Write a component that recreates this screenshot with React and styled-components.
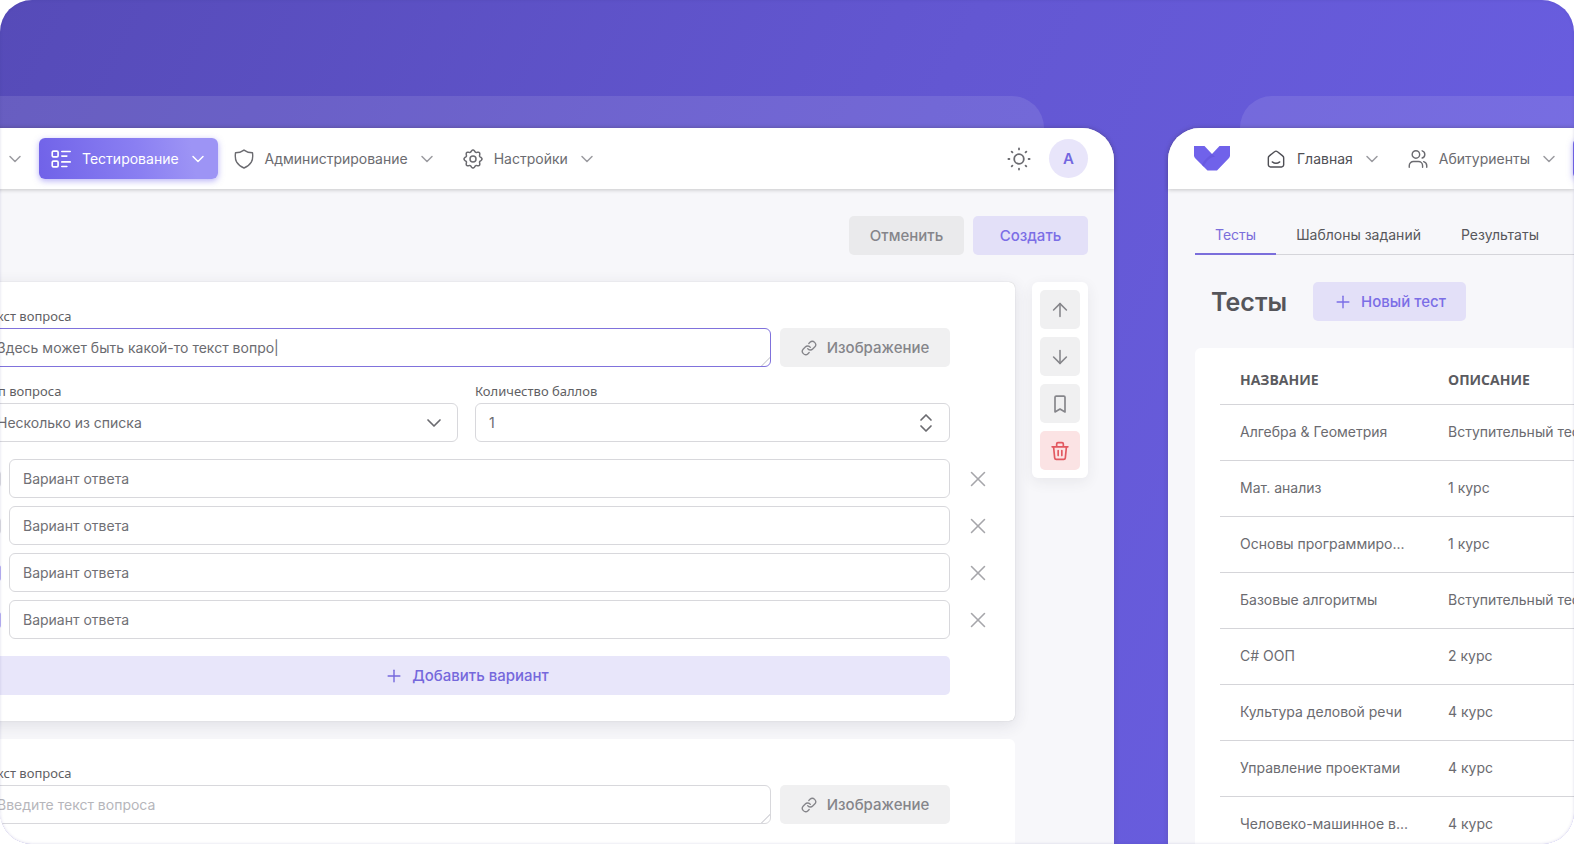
import React from 'react'
import styled, { createGlobalStyle, css } from 'styled-components';
import { ArrowDown, ArrowUp, ChevronDown, ChevronsUpDown, Link, Plus, X } from 'lucide-react';


const GlobalStyle = createGlobalStyle`
    * {
        box-sizing:border-box;
    }
    body {
        margin:0;
        background:#ffffff;
        color:#6b6b70;
        font-family:Inter, "Liberation Sans", sans-serif;
        font-size:14px;
        line-height:20px;
    }
    button, input, textarea, select {
        font:inherit;
        color:inherit;
    }
    button {
        cursor:pointer;
    }
`;

const Stage = styled.main`
    position:relative;
    z-index:0;
    display:flex;
    gap:54px;
    height:100vh;
    padding-top:128px;
    overflow:hidden;
    border-radius:32px;
    background:linear-gradient(115deg, #564bb8 0%, #6357d2 50%, #6b60e5 100%);

    &::after {
        content:"";
        position:absolute;
        inset:0;
        border-radius:32px;
        box-shadow:inset 0 0 3px rgba(60, 50, 140, 0.18);
        pointer-events:none;
    }
`;

const Window = styled.section`
    position:relative;
    min-width:0;
    background:#f7f7fa;
    box-shadow:0 0 5px rgba(80, 70, 100, 0.3);

    &::before {
        content:"";
        position:absolute;
        z-index:-1;
        top:-32px;
        height:32px;
        background:rgba(255, 255, 255, 0.1);
    }
`;

const EditorWindow = styled(Window)`
    flex:1;
    margin-left:-366px;
    border-radius:0 32px 0 0;

    &::before {
        left:0;
        right:70px;
        border-radius:0 32px 0 0;
    }
`;

const ListWindow = styled(Window)`
    flex:0 0 406px;
    border-radius:32px 0 0 0;

    &::before {
        left:72px;
        right:0;
        border-radius:32px 0 0 0;
    }
`;

const Header = styled.header`
    display:flex;
    align-items:center;
    justify-content:space-between;
    height:61px;
    padding:0 26px;
    border-radius:inherit;
    background:#ffffff;
    box-shadow:0 1px 4px rgba(0, 0, 0, 0.2);
`;

const ClippedHeader = styled(Header)`
    overflow:hidden;
    justify-content:flex-start;
`;

const HeaderSide = styled.div`
    display:flex;
    align-items:center;
    gap:${({ $gap }) => $gap}px;
`;

const LogoLink = styled.a`
    display:flex;
    flex:none;
`;

const Nav = styled.nav`
    display:flex;
    gap:4px;
`;

const NavButton = styled.button`
    display:flex;
    flex:none;
    align-items:center;
    gap:11px;
    height:41px;
    padding:0 12px;
    border:0;
    border-radius:6px;
    background:none;
    white-space:nowrap;
    color:${({ $dark }) => ($dark ? '#4f4f55' : '#6b6b70')};

    svg:last-child {
        margin:0 -2px;
        color:#9b9ba0;
    }

    ${({ $active }) => $active && css`
        background:linear-gradient(80deg, #7062e8 0%, #8a7ff2 55%, #9d94f5 85%);
        box-shadow:0 2px 6px rgba(115, 103, 240, 0.5);
        color:#ffffff;

        svg:last-child {
            color:#ffffff;
        }
    `}
`;

const ThemeButton = styled.button`
    display:flex;
    padding:0;
    border:0;
    background:none;
`;

const Avatar = styled.button`
    width:39px;
    height:39px;
    padding:0;
    border:0;
    border-radius:50%;
    background:#e8e5fa;
    color:#7367e0;
    font-size:15px;
    font-weight:600;
`;

const buttonColors = {
    gray: css`background:#f0f0f1; color:#85858a;`,
    darkGray: css`background:#eaeaec; color:#85858a;`,
    purple: css`background:#e3e0f8; color:#7b6ee6;`,
    lightPurple: css`background:#e8e6fa; color:#7568dc;`,
    red: css`background:#fbe3e4; color:#e25860;`,
};

const Button = styled.button`
    display:flex;
    flex:none;
    align-items:center;
    justify-content:center;
    gap:8px;
    height:39px;
    min-width:115px;
    padding:0 20px;
    border:0;
    border-radius:5px;
    font-size:15px;
    font-weight:500;
    white-space:nowrap;
    ${({ $color }) => buttonColors[$color]}
`;

const ImageButton = styled(Button)`
    width:170px;
    padding:0;
    gap:10px;
`;

const AddButton = styled(Button)`
    margin:17px 48px 0 0;
`;

const Actions = styled.div`
    display:flex;
    justify-content:flex-end;
    gap:9px;
    padding:27px 26px;
`;

const Editor = styled.div`
    display:flex;
    align-items:flex-start;
    gap:17px;
    padding:0 26px 0 284px;
`;

const Questions = styled.div`
    display:flex;
    flex:1;
    flex-direction:column;
    gap:18px;
    min-width:0;
`;

const Card = styled.form`
    display:flex;
    flex-direction:column;
    padding:24px 17px 26px 65px;
    border-radius:6px;
    background:#ffffff;
    box-shadow:${({ $selected }) => ($selected ? '0 4px 16px rgba(50, 50, 70, 0.12), 0 0 1px rgba(0, 0, 0, 0.25)' : 'none')};
`;

const Field = styled.div`
    display:flex;
    flex:1;
    flex-direction:column;
    gap:2px;
    min-width:0;
`;

const FieldRow = styled.div`
    display:flex;
    align-items:flex-end;
    gap:${({ $gap }) => $gap}px;
    margin:0 48px 14px 0;
`;

const Label = styled.label`
    color:#5f5f64;
    font-family:"Noto Sans", sans-serif;
    font-size:13px;
    line-height:20px;
`;

const inputStyles = css`
    display:block;
    width:100%;
    min-width:0;
    height:39px;
    margin:0;
    padding:0 13px;
    border:1px solid #d8d8dc;
    border-radius:6px;
    outline:none;
    background:#ffffff;

    &::placeholder {
        color:${({ $faint }) => ($faint ? '#b6b6bb' : '#707075')};
        opacity:1;
    }
`;

const Input = styled.input`
    ${inputStyles}
    appearance:textfield;

    &::-webkit-inner-spin-button {
        display:none;
    }
`;

const Select = styled.select`
    ${inputStyles}
    appearance:none;
`;

const TextArea = styled.textarea`
    ${inputStyles}
    padding:9px 13px;
    overflow:hidden;
    resize:vertical;
    border-color:${({ $focused }) => ($focused ? '#8072dc' : '#d8d8dc')};

    &::-webkit-resizer {
        background:linear-gradient(135deg, transparent 68%, #dcdce0 68%, #dcdce0 74%, transparent 74%);
    }
`;

const Control = styled.div`
    position:relative;
`;

const ControlIcon = styled.span`
    position:absolute;
    top:0;
    bottom:0;
    right:12px;
    display:flex;
    align-items:center;
    pointer-events:none;
`;

const Options = styled.div`
    display:flex;
    flex-direction:column;
    gap:8px;
    margin-top:3px;
`;

const Option = styled.div`
    display:flex;
    align-items:center;
    gap:8px;
`;

const Checkbox = styled.input`
    flex:none;
    width:18px;
    height:18px;
    margin:0;
    border:1px solid ${({ checked }) => (checked ? '#b9b2f5' : '#dcdce0')};
    border-radius:4px;
    background:${({ checked }) => (checked ? '#7367f0' : '#ffffff')};
    appearance:none;
`;

const RemoveButton = styled.button`
    display:flex;
    flex:none;
    align-items:center;
    justify-content:center;
    width:40px;
    height:39px;
    padding:0;
    border:0;
    background:none;
    color:#a6a6aa;
`;

const Toolbar = styled.aside`
    display:flex;
    flex-direction:column;
    gap:8px;
    padding:8px;
    border-radius:6px;
    background:#ffffff;
    box-shadow:0 4px 14px rgba(50, 50, 70, 0.08);
`;

const ToolButton = styled(Button)`
    width:40px;
    min-width:0;
    padding:0;
`;

const Page = styled.div`
    padding:27px 0 0 27px;
`;

const Tabs = styled.nav`
    display:flex;
    border-bottom:1px solid #d5d5da;
`;

const Tab = styled.a`
    flex:none;
    margin-bottom:-1px;
    padding:9px 20px 8px;
    border-bottom:2px solid ${({ $active }) => ($active ? '#7b6edb' : 'transparent')};
    color:${({ $active }) => ($active ? '#7b6edb' : '#57575c')};
    text-decoration:none;
    white-space:nowrap;
`;

const TitleRow = styled.div`
    display:flex;
    align-items:center;
    gap:26px;
    padding:27px 16px;
`;

const Title = styled.h1`
    margin:0;
    color:#55555a;
    font-size:25px;
    font-weight:600;
    line-height:32px;
`;

const TableCard = styled.div`
    padding:8px 0 0 25px;
    border-radius:6px 0 0 0;
    background:#ffffff;
    overflow:hidden;
`;

const Table = styled.table`
    width:100%;
    border-collapse:collapse;
    table-layout:fixed;
`;

const HeadCell = styled.th`
    width:${({ $width }) => $width};
    height:48px;
    padding:0 0 0 20px;
    border-bottom:1px solid #d5d5d9;
    color:#5b5b60;
    font-family:"Open Sans", "Noto Sans", sans-serif;
    font-size:14px;
    font-weight:700;
    text-align:left;
    text-transform:uppercase;
`;

const Cell = styled.td`
    height:56px;
    padding:0 0 0 20px;
    border-bottom:1px solid #d5d5d9;
    white-space:nowrap;
`;

const Icon = ({ size = 20, width = 1.5, children }) => (
    <svg width={size} height={size} viewBox="0 0 24 24" fill="none" stroke="currentColor" strokeWidth={width} strokeLinecap="round" strokeLinejoin="round" aria-hidden="true">
        {children}
    </svg>
)

const HomeIcon = () => (
    <Icon width={1.7}>
        <path d="M2.8 10.6c0-1 .4-1.8 1.2-2.4l6.2-4.9a2.8 2.8 0 0 1 3.6 0L20 8.2c.8.6 1.2 1.4 1.2 2.4V19a2.5 2.5 0 0 1-2.5 2.5H5.3A2.5 2.5 0 0 1 2.8 19z" />
        <path d="M7.5 15.5c2.5 1.800 6.5 1.800 9 0" />
    </Icon>
)

const UsersIcon = () => (
    <Icon width={1.7}>
        <circle cx="9.5" cy="6.5" r="4.5" />
        <path d="M1.5 22v-2a5 5 0 0 1 5-5h6a5 5 0 0 1 5 5v2M17 2.2a4.5 4.5 0 0 1 0 8.6M22.5 22v-2a5 5 0 0 0-3.7-4.8" />
    </Icon>
)

const TestsIcon = () => (
    <Icon width={2}>
        <rect x="1.5" y="2.5" width="7" height="7" rx="1.5" />
        <rect x="1.5" y="14.5" width="7" height="7" rx="1.5" />
        <path d="M13 3h10M13 8.5h6M13 15.5h10M13 21h6" />
    </Icon>
)

const ShieldIcon = () => (
    <Icon width={1.7}>
        <path d="M12 1.3c3 2.3 6.3 3.2 10.2 3.2.6 4.8.4 8.3-1.4 11.3-1.8 3-4.8 5.3-8.8 7-4-1.7-7-4-8.8-7-1.8-3-2-6.5-1.4-11.3 3.9 0 7.2-.9 10.200-3.200z" />
    </Icon>
)

// eight soft teeth around the hub
const gearPoints = Array.from({ length: 128 }, (_, i) => {
    const angle = (i / 128) * Math.PI * 2;
    const radius = 9.7 + 1.1 * Math.cos(angle * 8);
    return `${(12 + radius * Math.sin(angle)).toFixed(2)},${(12 - radius * Math.cos(angle)).toFixed(2)}`;
}).join(' ');

const SettingsIcon = () => (
    <Icon width={1.8}>
        <polygon points={gearPoints} />
        <circle cx="12" cy="12" r="3.6" />
    </Icon>
)

const SunIcon = () => (
    <Icon size={24} width={1.8}>
        <circle cx="12" cy="12" r="4.8" />
        <path d="M12 1.4v1M12 21.6v1M1.4 12h1M21.6 12h1M4.7 4.7l.7.7M18.6 18.6l.7.7M4.7 19.3l.7-.7M18.6 5.4l.7-.7" />
    </Icon>
)

const BookmarkIcon = () => (
    <Icon width={2}>
        <path d="M6 4a1.5 1.5 0 0 1 1.5-1.5h9A1.5 1.5 0 0 1 18 4v17.5l-6-3.5-6 3.5z" />
    </Icon>
)

const TrashIcon = () => (
    <Icon width={2}>
        <path d="M2.5 7h19M8 7V3.5A1.5 1.5 0 0 1 9.5 2h5A1.5 1.5 0 0 1 16 3.5V7M4.3 7l1.3 13.2A2 2 0 0 0 7.6 22h8.8a2 2 0 0 0 2-1.8L19.7 7M9.8 11.5v6M14.2 11.5v6" />
    </Icon>
)

const Logo = () => (
    <svg width="36" height="25" viewBox="0 0 36 25" aria-hidden="true">
        <path fill="#7062ea" d="M0 0h10.5L18 8l7.500-8H36v9.500c0 1-.4 2-1.200 2.700L23 24.500h-9.500L1.200 12.200A4 4 0 0 1 0 9.500z" />
        <path fill="#5f50d6" d="M18 8l3 2.800c-4.500.5-8 2.800-11.300 10L7.800 19c2.500-5 5.800-8 10.200-11z" opacity=".5" />
    </svg>
)

const NavItem = ({ icon, active, dark, children }) => (
    <NavButton type="button" $active={active} $dark={dark}>
        {icon}
        {children}
        <ChevronDown size={20} strokeWidth={1.8} />
    </NavButton>
)

const MainNav = () => (
    <HeaderSide $gap={24}>
        <LogoLink href="#" aria-label="Главная"><Logo /></LogoLink>
        <Nav>
            <NavItem icon={<HomeIcon />} dark>Главная</NavItem>
            <NavItem icon={<UsersIcon />}>Абитуриенты</NavItem>
            <NavItem icon={<TestsIcon />} active>Тестирование</NavItem>
            <NavItem icon={<ShieldIcon />}>Администрирование</NavItem>
            <NavItem icon={<SettingsIcon />}>Настройки</NavItem>
        </Nav>
    </HeaderSide>
)

const QuestionText = ({ id, value, focused }) => (
    <FieldRow $gap={9}>
        <Field>
            <Label htmlFor={id}>Текст вопроса</Label>
            <TextArea id={id} rows={1} defaultValue={value} placeholder="Введите текст вопроса" $faint $focused={focused} />
        </Field>
        <ImageButton type="button" $color="gray">
            <Link size={16} />
            Изображение
        </ImageButton>
    </FieldRow>
)

const options = [false, false, true, true];

const tests = [
    ['Алгебра & Геометрия', 'Вступительный тест'],
    ['Мат. анализ', '1 курс'],
    ['Основы программиро...', '1 курс'],
    ['Базовые алгоритмы', 'Вступительный тест'],
    ['C# ООП', '2 курс'],
    ['Культура деловой речи', '4 курс'],
    ['Управление проектами', '4 курс'],
    ['Человеко-машинное в...', '4 курс'],
];

const TestEditor = () => {
    const [checked, setChecked] = React.useState(options);
    const toggle = (index) => setChecked(checked.map((item, i) => (i === index ? !item : item)));

    return (
        <EditorWindow>
            <Header>
                <MainNav />
                <HeaderSide $gap={18}>
                    <ThemeButton type="button" aria-label="Тема"><SunIcon /></ThemeButton>
                    <Avatar type="button">A</Avatar>
                </HeaderSide>
            </Header>

            <Actions>
                <Button type="button" $color="darkGray">Отменить</Button>
                <Button type="button" $color="purple">Создать</Button>
            </Actions>

            <Editor>
                <Questions>
                    <Card $selected>
                        <QuestionText id="question-1" value="Здесь может быть какой-то текст вопро|" focused />

                        <FieldRow $gap={17}>
                            <Field>
                                <Label htmlFor="type">Тип вопроса</Label>
                                <Control>
                                    <Select id="type">
                                        <option>Несколько из списка</option>
                                        <option>Один из списка</option>
                                    </Select>
                                    <ControlIcon><ChevronDown size={24} strokeWidth={1.7} /></ControlIcon>
                                </Control>
                            </Field>
                            <Field>
                                <Label htmlFor="points">Количество баллов</Label>
                                <Control>
                                    <Input id="points" type="number" defaultValue="1" />
                                    <ControlIcon><ChevronsUpDown size={24} strokeWidth={1.7} /></ControlIcon>
                                </Control>
                            </Field>
                        </FieldRow>

                        <Options>
                            {checked.map((isChecked, index) => (
                                <Option key={index}>
                                    <Checkbox type="checkbox" checked={isChecked} onChange={() => toggle(index)} aria-label={`Верный вариант ${index + 1}`} />
                                    <Input type="text" placeholder="Вариант ответа" aria-label={`Вариант ответа ${index + 1}`} />
                                    <RemoveButton type="button" aria-label="Удалить вариант">
                                        <X size={26} strokeWidth={1.4} />
                                    </RemoveButton>
                                </Option>
                            ))}
                        </Options>

                        <AddButton type="button" $color="lightPurple">
                            <Plus size={20} strokeWidth={1.7} />
                            Добавить вариант
                        </AddButton>
                    </Card>

                    <Card>
                        <QuestionText id="question-2" />
                    </Card>
                </Questions>

                <Toolbar>
                    <ToolButton type="button" $color="gray" aria-label="Выше"><ArrowUp size={22} strokeWidth={1.7} /></ToolButton>
                    <ToolButton type="button" $color="gray" aria-label="Ниже"><ArrowDown size={22} strokeWidth={1.7} /></ToolButton>
                    <ToolButton type="button" $color="gray" aria-label="Сохранить"><BookmarkIcon /></ToolButton>
                    <ToolButton type="button" $color="red" aria-label="Удалить"><TrashIcon /></ToolButton>
                </Toolbar>
            </Editor>
        </EditorWindow>
    )
}

const TestList = () => (
    <ListWindow>
        <ClippedHeader>
            <MainNav />
        </ClippedHeader>

        <Page>
            <Tabs>
                <Tab href="#tests" $active>Тесты</Tab>
                <Tab href="#templates">Шаблоны заданий</Tab>
                <Tab href="#results">Результаты</Tab>
            </Tabs>

            <TitleRow>
                <Title>Тесты</Title>
                <Button type="button" $color="purple">
                    <Plus size={20} strokeWidth={1.7} />
                    Новый тест
                </Button>
            </TitleRow>

            <TableCard>
                <Table>
                    <thead>
                        <tr>
                            <HeadCell $width="208px">Название</HeadCell>
                            <HeadCell>Описание</HeadCell>
                        </tr>
                    </thead>
                    <tbody>
                        {tests.map(([name, description]) => (
                            <tr key={name}>
                                <Cell>{name}</Cell>
                                <Cell>{description}</Cell>
                            </tr>
                        ))}
                    </tbody>
                </Table>
            </TableCard>
        </Page>
    </ListWindow>
)

const App = () => {
    return (
        <>
            <GlobalStyle />
            <Stage>
                <TestEditor />
                <TestList />
            </Stage>
        </>
    )
}

export default App
